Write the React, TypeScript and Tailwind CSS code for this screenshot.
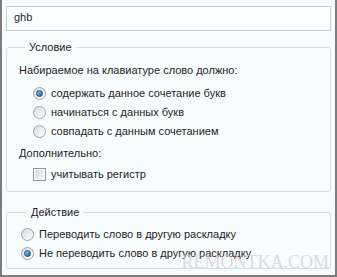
import React from 'react';

const font = { fontFamily: '"Liberation Sans", Arial, sans-serif' };

const Radio = ({ checked }: { checked?: boolean }) => (
    <span className="relative inline-flex h-[13px] w-[13px] shrink-0 items-center justify-center rounded-full border border-[#9da3a8] bg-gradient-to-br from-[#d9dcdf] to-[#ffffff]">
        {checked && (
            <span className="h-[7px] w-[7px] rounded-full border border-[#1c4a77] bg-gradient-to-br from-[#9fd0f1] to-[#1d5d95]" />
        )}
    </span>
);

const Checkbox = () => (
    <span className="inline-flex h-[13px] w-[13px] shrink-0 items-center justify-center border border-[#8f9499] bg-white">
        <span className="h-[9px] w-[9px] bg-gradient-to-br from-[#d4d8dc] to-[#f6f7f8]" />
    </span>
);

const Option = ({ checked, label, box }: { checked?: boolean; label: string; box?: boolean }) => (
    <div className="flex h-[19px] items-center gap-[5px]">
        {box ? <Checkbox /> : <Radio checked={checked} />}
        <span>{label}</span>
    </div>
);

export default function App() {
    return (
        <div
            style={font}
            className="relative flex h-[277px] w-[337px] flex-col overflow-hidden border-x-2 border-b-2 border-[#7c7c7c] bg-[#f7fcfd] text-[11px] leading-[15px] text-[#1e1e1e]"
        >
            {/* text input */}
            <div className="mx-[4px] mt-[6px] flex h-[25px] items-center border border-[#c9d0d5] bg-[#fbfefe] px-[7px] pb-[2px]">
                ghb
            </div>

            {/* Условие */}
            <fieldset className="mx-[4px] mt-[9px] h-[152px] rounded-[3px] border border-[#d6dee3] px-[12px]">
                <legend className="ml-[6px] px-[4px]">Условие</legend>
                <div className="mt-[8px]">Набираемое на клавиатуре слово должно:</div>
                <div className="mt-[6px] flex flex-col pl-[14px]">
                    <Option checked label="содержать данное сочетание букв" />
                    <Option label="начинаться с данных букв" />
                    <Option label="совпадать с данным сочетанием" />
                </div>
                <div className="mt-[5px]">Дополнительно:</div>
                <div className="mt-[4px] pl-[14px]">
                    <Option box label="учитывать регистр" />
                </div>
            </fieldset>

            {/* Действие */}
            <fieldset className="mx-[4px] mt-[13px] h-[64px] rounded-[3px] border border-[#d6dee3] px-[14px]">
                <legend className="ml-[6px] px-[4px]">Действие</legend>
                <div className="mt-[5px] flex flex-col">
                    <Option label="Переводить слово в другую раскладку" />
                    <Option checked label="Не переводить слово в другую раскладку" />
                </div>
            </fieldset>

            {/* watermark */}
            <div className="pointer-events-none absolute bottom-[5px] right-[6px] text-[18px] text-[#d6c8cc]/70" style={{ fontFamily: '"Liberation Serif", serif' }}>
                REMONTKA.COM
            </div>
        </div>
    );
}
